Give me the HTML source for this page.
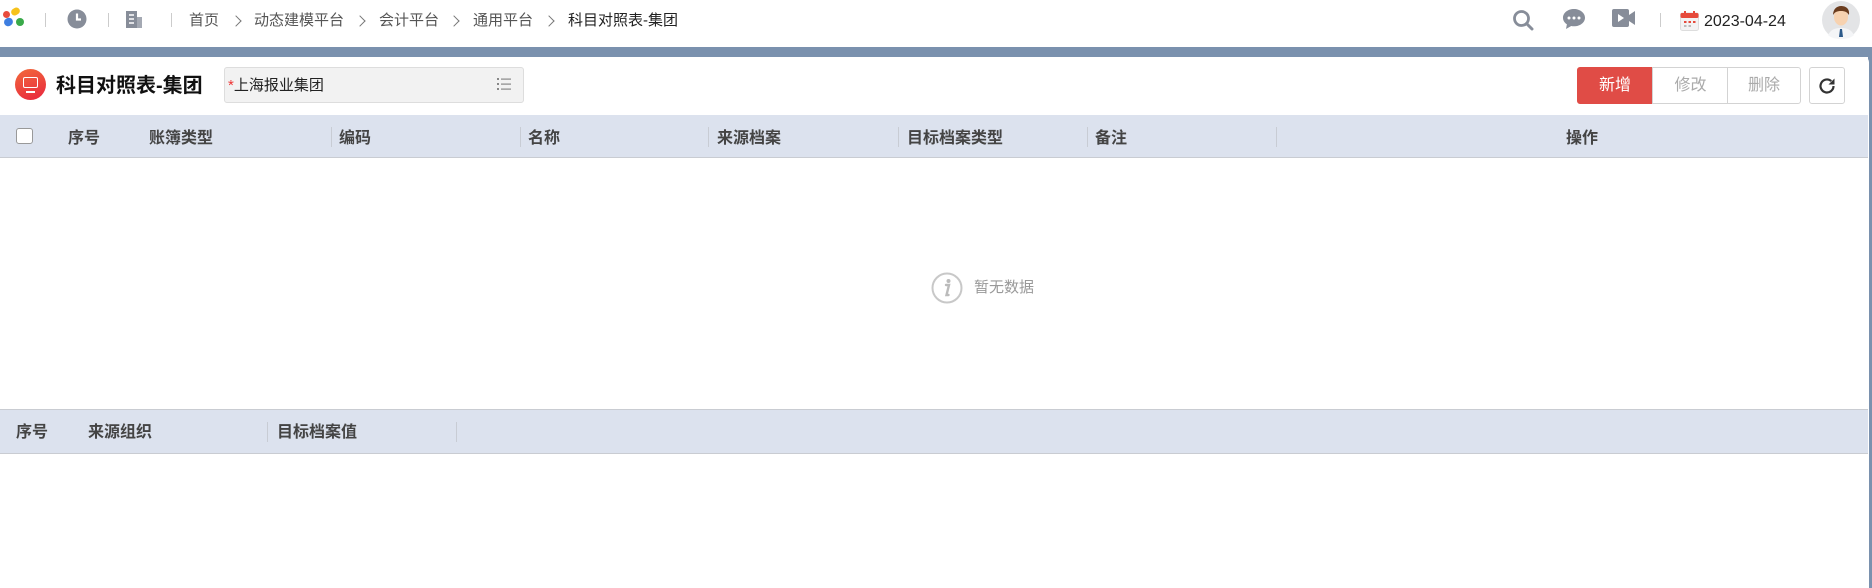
<!DOCTYPE html>
<html><head><meta charset="utf-8"><style>
*{margin:0;padding:0;box-sizing:border-box}
body{width:1872px;height:588px;overflow:hidden;background:#fff;font-family:"Liberation Sans","Noto Sans CJK SC",sans-serif;position:relative;color:#333;line-height:1.2}
.a{position:absolute}
.sep{position:absolute;width:1px;background:#ccc}
.bc{position:absolute;top:12px;font-size:15px;line-height:18px;color:#555;white-space:nowrap}
.chev{position:absolute;top:17px;width:8px;height:8px;border-right:1.6px solid #777;border-top:1.6px solid #777;transform:rotate(45deg)}
.th{position:absolute;font-size:16px;line-height:20px;font-weight:bold;color:#444;white-space:nowrap}
.vs{position:absolute;width:1px;background:#c8ccd4}
.btn{position:absolute;top:67px;height:37px;font-size:16px;display:flex;align-items:center;justify-content:center;border:1px solid #d3d3d3;background:#fff;color:#aaa}
</style></head><body>
<div class="a" style="left:3px;top:11px;width:7px;height:7px;border-radius:50%;background:#e84c3d"></div>
<div class="a" style="left:11px;top:8px;width:9px;height:7px;border-radius:4px;background:#f6c21b;transform:rotate(-30deg)"></div>
<div class="a" style="left:4px;top:18px;width:9px;height:8px;border-radius:4px;background:#3e7ee0;transform:rotate(-30deg)"></div>
<div class="a" style="left:16px;top:18px;width:8px;height:8px;border-radius:50%;background:#3aaa4a"></div>
<div class="sep" style="left:45px;top:13px;height:14px"></div>
<svg class="a" style="left:67px;top:9px" width="20" height="20" viewBox="0 0 20 20"><circle cx="10" cy="10" r="9.5" fill="#878d99"/><path d="M10 4.5V10.5H14" stroke="#fff" stroke-width="2.2" fill="none"/></svg>
<div class="sep" style="left:108px;top:13px;height:14px"></div>
<svg class="a" style="left:124px;top:9px" width="20" height="20" viewBox="0 0 20 20"><path d="M2 2h11v17H2z" fill="#878d99"/><path d="M13 8h5v11h-5z" fill="#a4a9b3"/><path d="M5 6h5M5 10h5M5 14h5" stroke="#fff" stroke-width="1.6"/></svg>
<div class="sep" style="left:171px;top:13px;height:14px"></div>
<div class="bc" style="left:189px">首页</div>
<div class="chev" style="left:232px"></div>
<div class="bc" style="left:254px">动态建模平台</div>
<div class="chev" style="left:356px"></div>
<div class="bc" style="left:379px">会计平台</div>
<div class="chev" style="left:450px"></div>
<div class="bc" style="left:473px">通用平台</div>
<div class="chev" style="left:545px"></div>
<div class="bc" style="left:568px;color:#222">科目对照表-集团</div>

<svg class="a" style="left:1512px;top:9px" width="22" height="22" viewBox="0 0 22 22"><circle cx="9.5" cy="9.5" r="7" stroke="#878d99" stroke-width="2.8" fill="none"/><path d="M14.5 14.5L20 20" stroke="#878d99" stroke-width="3" stroke-linecap="round"/></svg>
<svg class="a" style="left:1562px;top:8px" width="24" height="22" viewBox="0 0 24 22"><path d="M12 1C5.9 1 1 4.9 1 9.7c0 2.7 1.5 5 3.9 6.6L4 21l5.2-3c.9.2 1.8.3 2.8.3 6.1 0 11-3.9 11-8.6S18.1 1 12 1z" fill="#878d99"/><circle cx="7" cy="10" r="1.5" fill="#fff"/><circle cx="12" cy="10" r="1.5" fill="#fff"/><circle cx="17" cy="10" r="1.5" fill="#fff"/></svg>
<svg class="a" style="left:1612px;top:8px" width="24" height="20" viewBox="0 0 24 20"><rect x="0" y="1" width="17" height="18" rx="2" fill="#878d99"/><path d="M17 7l6-4v14l-6-4z" fill="#878d99"/><path d="M6 6v8l6-4z" fill="#fff"/></svg>
<div class="sep" style="left:1660px;top:13px;height:14px"></div>
<svg class="a" style="left:1680px;top:10px" width="19" height="21" viewBox="0 0 19 21"><rect x="0.5" y="3" width="18" height="17.5" rx="2" fill="#f3f3f3" stroke="#ddd"/><rect x="0.5" y="3" width="18" height="5" rx="1.5" fill="#e64a3b"/><rect x="4" y="1" width="2" height="4" fill="#e64a3b"/><rect x="13" y="1" width="2" height="4" fill="#e64a3b"/><g fill="#e64a3b"><rect x="4" y="11" width="2.5" height="2"/><rect x="8.5" y="11" width="2.5" height="2"/><rect x="13" y="11" width="2.5" height="2"/><rect x="4" y="15" width="2.5" height="2" fill="#bbb"/><rect x="8.5" y="15" width="2.5" height="2" fill="#bbb"/></g></svg>
<div class="a" style="left:1704px;top:12px;font-size:16px;line-height:20px;color:#222">2023-04-24</div>
<svg class="a" style="left:1822px;top:1px" width="38" height="38" viewBox="0 0 38 38"><circle cx="19" cy="19" r="19" fill="#e3e4e6"/><path d="M6 34c3-6 8-7 13-7s10 1 13 7c-3 3-8 4-13 4s-10-1-13-4z" fill="#f4f5f7"/><path d="M18 28h2l1 8h-4z" fill="#2d5a8a"/><ellipse cx="19" cy="16" rx="7" ry="8.5" fill="#f7d2b0"/><path d="M11 14c0-6 4-9 8-9s9 2 8 9c-2-3-4-4-8-4s-6 1-8 4z" fill="#6b3d1f"/></svg>

<div class="a" style="left:0;top:47px;width:1872px;height:10px;background:#7a91ae"></div>
<div class="a" style="left:1868px;top:47px;width:4px;height:541px;background:#7a91ae"></div>
<div class="a" style="left:0;top:57px;width:1869px;height:531px;background:#fff;border-top-right-radius:5px"></div>

<div class="a" style="left:15px;top:69px;width:31px;height:31px;border-radius:50%;background:linear-gradient(160deg,#f26a3c,#e8263e)"></div>
<div class="a" style="left:23px;top:77px;width:15px;height:11px;border:1.5px solid #fff;border-radius:2px"></div>
<div class="a" style="left:26px;top:91px;width:9px;height:1.5px;background:#fff"></div>
<div class="a" style="left:56px;top:74px;font-size:20px;line-height:24px;font-weight:bold;color:#111">科目对照表-集团</div>
<div class="a" style="left:224px;top:67px;width:300px;height:36px;background:#f2f2f2;border:1px solid #ddd;border-radius:3px"></div>
<div class="a" style="left:228px;top:76px;font-size:15px;line-height:20px;color:#222"><span style="color:#e33">*</span>上海报业集团</div>
<svg class="a" style="left:497px;top:78px" width="14" height="12" viewBox="0 0 14 12"><g fill="#888"><rect x="0" y="0" width="2" height="2"/><rect x="0" y="5" width="2" height="2"/><rect x="0" y="10" width="2" height="2"/><rect x="4" y="0.5" width="10" height="1.2"/><rect x="4" y="5.5" width="10" height="1.2"/><rect x="4" y="10.5" width="10" height="1.2"/></g></svg>

<div class="btn" style="left:1577px;width:76px;background:#e04c46;border-color:#e04c46;color:#fff;border-radius:3px 0 0 3px">新增</div>
<div class="btn" style="left:1652px;width:76px;border-right:none">修改</div>
<div class="btn" style="left:1727px;width:74px;border-radius:0 3px 3px 0">删除</div>
<div class="btn" style="left:1809px;width:36px;border-radius:3px"><svg width="20" height="20" viewBox="0 0 20 20"><path d="M16.5 10a6.5 6.5 0 1 1-2.2-4.9" stroke="#333" stroke-width="2.2" fill="none"/><path d="M17.5 2.5v6h-6z" fill="#333"/></svg></div>

<div class="a" style="left:0;top:115px;width:1868px;height:43px;background:#dce2ee;border-bottom:1px solid #c9ccd2"></div>
<div class="a" style="left:16px;top:128px;width:17px;height:16px;background:#fff;border:1px solid #999;border-radius:3px"></div>
<div class="th" style="left:68px;top:129px">序号</div>
<div class="th" style="left:149px;top:129px">账簿类型</div>
<div class="vs" style="left:331px;top:127px;height:20px"></div>
<div class="th" style="left:339px;top:129px">编码</div>
<div class="vs" style="left:520px;top:127px;height:20px"></div>
<div class="th" style="left:528px;top:129px">名称</div>
<div class="vs" style="left:708px;top:127px;height:20px"></div>
<div class="th" style="left:717px;top:129px">来源档案</div>
<div class="vs" style="left:898px;top:127px;height:20px"></div>
<div class="th" style="left:907px;top:129px">目标档案类型</div>
<div class="vs" style="left:1087px;top:127px;height:20px"></div>
<div class="th" style="left:1095px;top:129px">备注</div>
<div class="vs" style="left:1276px;top:127px;height:20px"></div>
<div class="th" style="left:1566px;top:129px">操作</div>

<svg class="a" style="left:931px;top:272px" width="32" height="32" viewBox="0 0 32 32"><circle cx="16" cy="16" r="14.5" stroke="#c8c8c8" stroke-width="2" fill="none"/><circle cx="17.5" cy="9" r="2" fill="#bbb"/><path d="M15 13h3l-2.5 10h2" stroke="#bbb" stroke-width="2.4" fill="none" stroke-linecap="round"/></svg>
<div class="a" style="left:974px;top:278px;font-size:15px;line-height:20px;color:#999">暂无数据</div>

<div class="a" style="left:0;top:409px;width:1868px;height:45px;background:#dce2ee;border-top:1px solid #c9ccd2;border-bottom:1px solid #c9ccd2"></div>
<div class="th" style="left:16px;top:423px">序号</div>
<div class="th" style="left:88px;top:423px">来源组织</div>
<div class="vs" style="left:267px;top:422px;height:20px"></div>
<div class="th" style="left:277px;top:423px">目标档案值</div>
<div class="vs" style="left:456px;top:422px;height:20px"></div>
</body></html>
